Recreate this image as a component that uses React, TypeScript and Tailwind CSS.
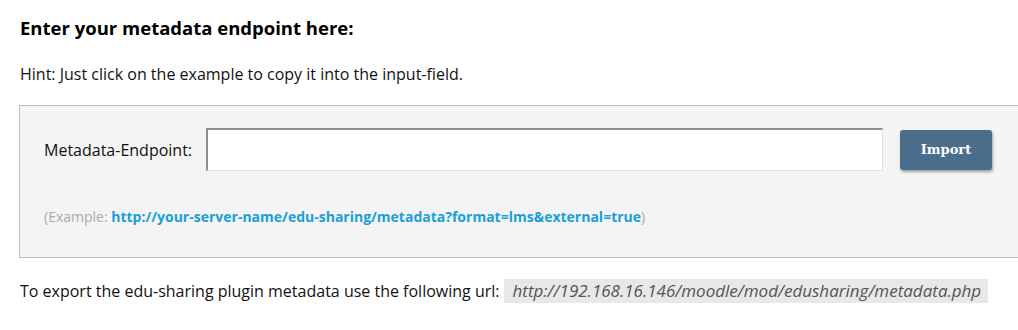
export default function App() {
  return (
    <div
      className="w-[1018px] h-[330px] overflow-hidden bg-white text-[#111]"
      style={{ fontFamily: '"Open Sans", "Noto Sans", sans-serif' }}
    >
      <div className="pl-5 pt-[14px]">
        {/* Heading */}
        <h2 className="text-[18.5px] font-bold leading-[28px] text-black">Enter your metadata endpoint here:</h2>
        <p className="mt-[21px] text-[16px] leading-[22px]">
          Hint: Just click on the example to copy it into the input-field.
        </p>

        {/* Form box */}
        <div className="mt-[20px] -ml-px w-[1020px] border border-[#bdbdbd] bg-[#f4f4f4] pl-6 pt-[22px] pb-[31px]">
          <div className="flex items-center">
            <label className="w-[162px] text-[16px] leading-[22px]">Metadata-Endpoint:</label>
            <input
              type="text"
              className="h-[43px] w-[677px] border-t-2 border-l-2 border-b border-r border-t-[#8f8f8f] border-l-[#8f8f8f] border-b-[#e0e0e0] border-r-[#e0e0e0] bg-white px-2 outline-none"
            />
            <button
              className="ml-[17px] h-[40px] w-[92px] rounded-[3px] bg-[#4a6d8c] text-[13px] font-bold text-white shadow-[1px_2px_3px_rgba(0,0,0,0.35)]"
              style={{ fontFamily: '"DejaVu Serif", "Liberation Serif", serif' }}
            >
              Import
            </button>
          </div>
          <div className="mt-[37px] text-[14px] leading-[18px] text-[#aaaaaa]">
            (Example:{' '}
            <a className="cursor-pointer font-bold text-[#1a9fd6]">
              http://your-server-name/edu-sharing/metadata?format=lms&amp;external=true
            </a>
            )
          </div>
        </div>

        {/* Export url */}
        <div className="mt-[21px] flex items-center text-[16px] leading-[22px]">
          <span>To export the edu-sharing plugin metadata use the following url:</span>
          <code
            className="ml-[4px] bg-[#e8e8e8] pl-[9px] pr-[7px] py-[1px] text-[17px] italic leading-[22px] text-[#555]"
            style={{ fontFamily: '"Open Sans", "Noto Sans", sans-serif' }}
          >
            http://192.168.16.146/moodle/mod/edusharing/metadata.php
          </code>
        </div>
      </div>
    </div>
  )
}
